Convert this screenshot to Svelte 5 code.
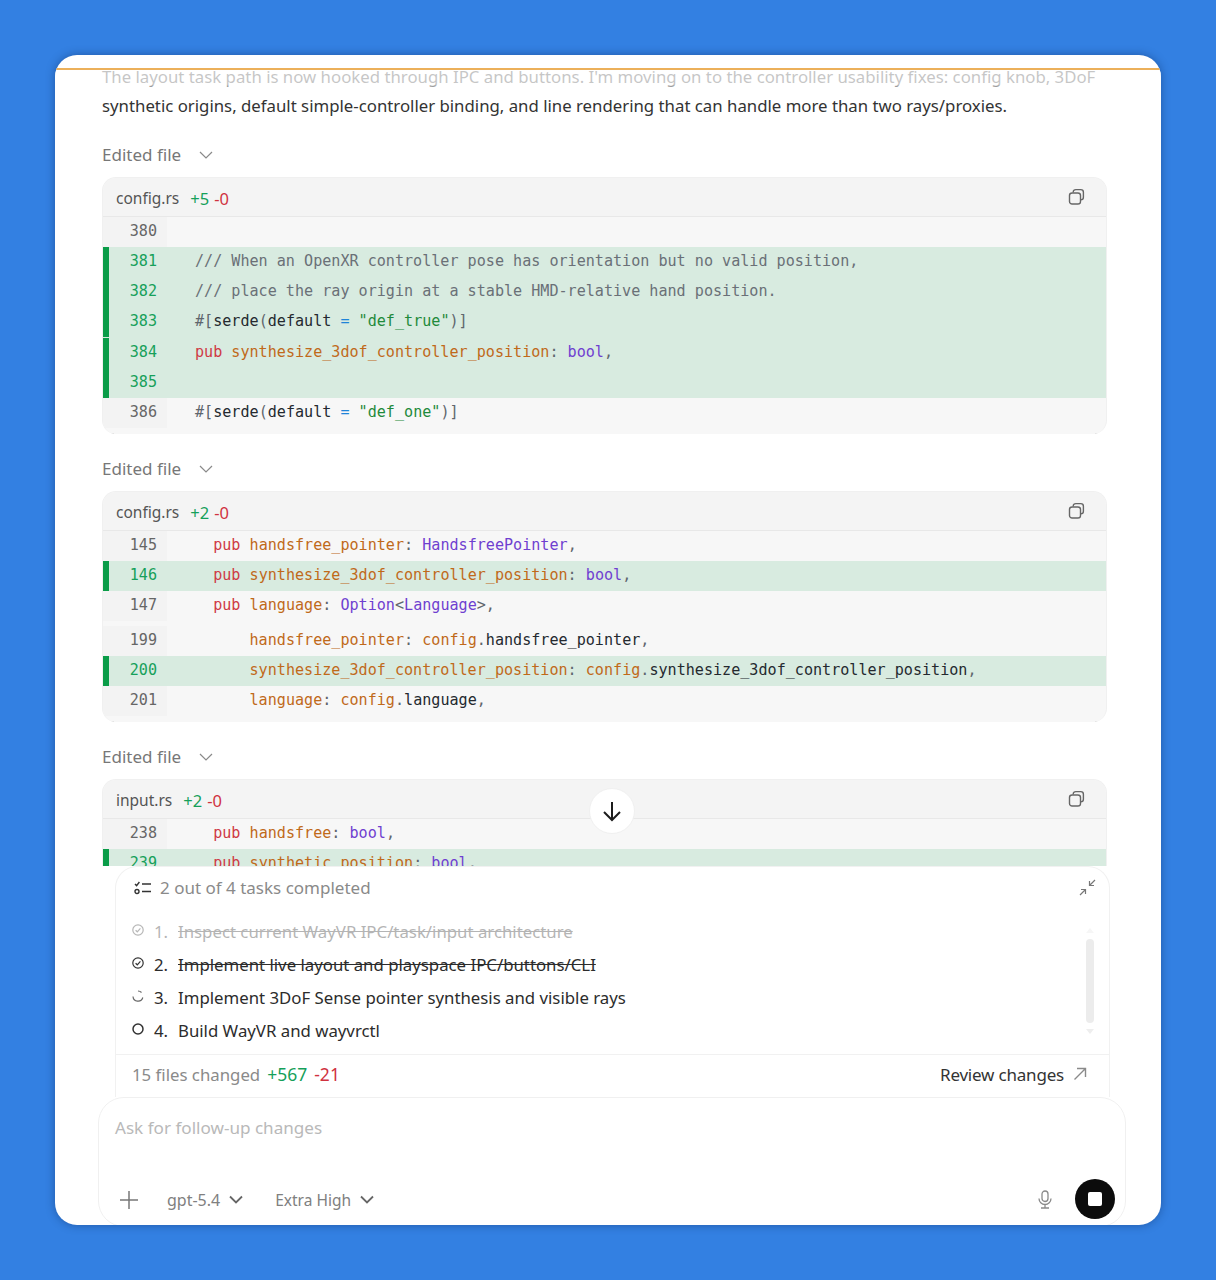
<script lang="ts">
  // token kinds: c comment, k keyword, f field, t type, s string, o operator, p plain, m muted
  const serde = (name: string) => [
    ["m", "#["], ["p", "serde"], ["m", "("], ["p", "default "], ["o", "="], ["s", ` "${name}"`], ["m", ")]"]
  ];

  const files = [
    {
      name: "config.rs", added: 5,
      rows: [
        { n: 380, code: [] },
        { n: 381, add: true, code: [["c", "/// When an OpenXR controller pose has orientation but no valid position,"]] },
        { n: 382, add: true, code: [["c", "/// place the ray origin at a stable HMD-relative hand position."]] },
        { n: 383, add: true, code: serde("def_true") },
        { n: 384, add: true, split: true, code: [["k", "pub "], ["f", "synthesize_3dof_controller_position"], ["m", ": "], ["t", "bool"], ["m", ","]] },
        { n: 385, add: true, code: [] },
        { n: 386, code: serde("def_one") }
      ]
    },
    {
      name: "config.rs", added: 2,
      rows: [
        { n: 145, code: [["p", "  "], ["k", "pub "], ["f", "handsfree_pointer"], ["m", ": "], ["t", "HandsfreePointer"], ["m", ","]] },
        { n: 146, add: true, code: [["p", "  "], ["k", "pub "], ["f", "synthesize_3dof_controller_position"], ["m", ": "], ["t", "bool"], ["m", ","]] },
        { n: 147, code: [["p", "  "], ["k", "pub "], ["f", "language"], ["m", ": "], ["t", "Option"], ["m", "<"], ["t", "Language"], ["m", ">,"]] },
        { n: 199, jump: true, code: [["p", "      "], ["f", "handsfree_pointer"], ["m", ": "], ["f", "config"], ["m", "."], ["p", "handsfree_pointer"], ["m", ","]] },
        { n: 200, add: true, code: [["p", "      "], ["f", "synthesize_3dof_controller_position"], ["m", ": "], ["f", "config"], ["m", "."], ["p", "synthesize_3dof_controller_position"], ["m", ","]] },
        { n: 201, code: [["p", "      "], ["f", "language"], ["m", ": "], ["f", "config"], ["m", "."], ["p", "language"], ["m", ","]] }
      ]
    },
    {
      name: "input.rs", added: 2,
      rows: [
        { n: 238, code: [["p", "  "], ["k", "pub "], ["f", "handsfree"], ["m", ": "], ["t", "bool"], ["m", ","]] },
        { n: 239, add: true, code: [["p", "  "], ["k", "pub "], ["f", "synthetic_position"], ["m", ": "], ["t", "bool"], ["m", ","]] }
      ]
    }
  ];

  const tasks = [
    { text: "Inspect current WayVR IPC/task/input architecture", state: "done", faded: true },
    { text: "Implement live layout and playspace IPC/buttons/CLI", state: "done" },
    { text: "Implement 3DoF Sense pointer synthesis and visible rays", state: "running" },
    { text: "Build WayVR and wayvrctl", state: "todo" }
  ];
</script>

<div class="window">
  <div class="topbar"></div>

  <div class="scroller">
    <p class="message">The layout task path is now hooked through IPC and buttons. I'm moving on to the controller usability fixes: config knob, 3DoF synthetic origins, default simple-controller binding, and line rendering that can handle more than two rays/proxies.</p>
    <div class="fade"></div>

    {#each files as file}
      <div class="edited">
        <span>Edited file</span>
        <svg width="16" height="16" viewBox="0 0 16 16" fill="none" stroke="#8a8a8a" stroke-width="1.2"><path d="M2 5 8 11l6-6" /></svg>
      </div>
      <div class="card">
        <div class="card-head">
          <span class="filename">{file.name}</span>
          <span class="plus">+{file.added}</span>
          <span class="minus">-0</span>
          <svg class="copy" width="18" height="18" viewBox="0 0 18 18" fill="none" stroke="#666" stroke-width="1.4">
            <rect x="1.5" y="5" width="11" height="11" rx="2.6" />
            <path d="M5.2 4.6V4.2a2.6 2.6 0 0 1 2.6-2.6h5a2.6 2.6 0 0 1 2.6 2.6v5a2.6 2.6 0 0 1-2.6 2.6h-.3" />
          </svg>
        </div>
        {#each file.rows as row}
          <div class="row" class:added={row.add} class:split={row.split} class:jump={row.jump}>
            <span class="num">{row.n}</span>
            <code>{#each row.code as [kind, text]}<span class={kind}>{text}</span>{/each}</code>
          </div>
        {/each}
      </div>
    {/each}

    <button class="to-bottom" aria-label="Scroll to bottom">
      <svg width="24" height="24" viewBox="0 0 24 24" fill="none" stroke="#1c1c1c" stroke-width="2"><path d="M12 3v18M4 13l8 8 8-8" /></svg>
    </button>
  </div>

  <section class="tasks">
    <header class="tasks-head">
      <svg width="18" height="14" viewBox="0 0 18 14" fill="none" stroke="#333" stroke-width="1.4">
        <path d="M1 3l1.6 1.6L5.4 1M8 3h9M8 10.5h9" />
        <circle cx="3" cy="10.5" r="2" />
      </svg>
      <span>2 out of 4 tasks completed</span>
      <svg class="collapse" width="17" height="17" viewBox="0 0 17 17" fill="none" stroke="#777" stroke-width="1.2">
        <path d="M16 1l-5.5 5.5M10.5 2v4.5H15M1 16l5.5-5.5M2 10.5h4.500V15" />
      </svg>
    </header>
    <div class="task-list">
      <ol>
        {#each tasks as task, i}
          <li class:faded={task.faded}>
            <svg width="12" height="12" viewBox="0 0 12 12" fill="none" stroke="#333" stroke-width="1.2">
              {#if task.state === "done"}
                <circle cx="6" cy="6" r="5.2" />
                <path d="M3.6 6.2 5.300 7.800 8.400 4.400" />
              {:else if task.state === "running"}
                <path d="M1 6.500a5 5 0 0 0 9.800 1M9.500 2.500A5 5 0 0 0 6 1" stroke="#666" />
              {:else}
                <circle cx="6" cy="6" r="5" stroke-width="1.500" />
              {/if}
            </svg>
            <span class="idx">{i + 1}.</span>
            <span class:struck={task.state === "done"}>{task.text}</span>
          </li>
        {/each}
      </ol>
      <div class="scrollbar">
        <i class="up"></i>
        <i class="thumb"></i>
        <i class="down"></i>
      </div>
    </div>
    <footer class="tasks-foot">
      <span class="changed">15 files changed</span>
      <span class="plus">+567</span>
      <span class="minus">-21</span>
      <span class="review">Review changes</span>
      <svg width="14" height="14" viewBox="0 0 14 14" fill="none" stroke="#8a8a8a" stroke-width="1.4"><path d="M1.500 12.500 12.500 1.500M4 1.500h8.500V10" /></svg>
    </footer>
  </section>

  <div class="composer">
    <div class="placeholder">Ask for follow-up changes</div>
    <div class="controls">
      <svg class="attach" width="20" height="20" viewBox="0 0 20 20" fill="none" stroke="#777" stroke-width="1.500"><path d="M10 1v18M1 10h18" /></svg>
      <span class="model">gpt-5.4</span>
      <svg width="14" height="9" viewBox="0 0 14 9" fill="none" stroke="#666" stroke-width="1.800"><path d="M1 1.500l6 6 6-6" /></svg>
      <span class="model effort">Extra High</span>
      <svg width="14" height="9" viewBox="0 0 14 9" fill="none" stroke="#666" stroke-width="1.800"><path d="M1 1.500l6 6 6-6" /></svg>
      <svg class="mic" width="14" height="19" viewBox="0 0 14 19" fill="none" stroke="#8a8a8a" stroke-width="1.300">
        <rect x="4" y="1" width="6" height="10.500" rx="3" />
        <path d="M1 8.500a6 6 0 0 0 12 0M7 14.500V18M3 18h8" />
      </svg>
      <button class="stop" aria-label="Stop"><i></i></button>
    </div>
  </div>
</div>

<style>
  :global(body) {
    background: #3380e2;
    font-family: "Noto Sans", sans-serif;
  }

  .window {
    position: relative;
    display: flex;
    flex-direction: column;
    width: 1106px;
    height: 1170px;
    margin: 55px;
    background: #fff;
    border-radius: 22px;
    overflow: hidden;
    box-shadow: 0 0 10px rgba(10, 40, 90, 0.45);
  }

  .topbar {
    flex: none;
    height: 13px;
    border-bottom: 2px solid #ecb05a;
  }

  .scroller {
    position: relative;
    flex: none;
    height: 796px;
    padding: 0 54px 0 47px;
    overflow: hidden;
  }

  .fade {
    position: absolute;
    top: 0;
    left: 0;
    right: 0;
    height: 22px;
    background: linear-gradient(rgba(255, 255, 255, 0.72) 65%, rgba(255, 255, 255, 0));
  }

  .message {
    margin: -8px 0 0;
    padding-bottom: 1px;
    font-size: 16.800px;
    line-height: 29px;
    color: #333;
  }

  .edited {
    display: flex;
    align-items: center;
    gap: 17px;
    height: 35px;
    padding-bottom: 1px;
    margin-top: 16px;
    color: #777;
    font-size: 17px;
  }

  .card {
    position: relative;
    margin-top: 4px;
    margin-bottom: 17px;
    padding-bottom: 6px;
    background: #f7f7f7;
    border: 1px solid #f0f0f0;
    border-width: 1px 1px 0;
    border-radius: 14px;
    overflow: hidden;
  }

  .card::before,
  .card::after {
    content: "";
    position: absolute;
    bottom: 0;
    width: 6px;
    height: 1px;
    background: #dedede;
  }

  .card::before {
    left: 5px;
  }

  .card::after {
    right: 5px;
  }

  .card-head {
    display: flex;
    align-items: center;
    gap: 5px;
    height: 36px;
    padding: 2px 20px 0 13px;
    background: #f4f4f4;
    border-bottom: 1px solid #e8e8e8;
    font-size: 16.500px;
  }

  .filename {
    margin-right: 6px;
    font-size: 15.500px;
    color: #555;
  }

  .plus {
    color: #16a05a;
  }

  .minus {
    color: #d0323f;
  }

  .copy {
    margin-left: auto;
    margin-top: -2px;
  }

  .row {
    display: flex;
    height: 30px;
    font-family: "DejaVu Sans Mono", monospace;
    font-size: 15.100px;
    line-height: 28px;
  }

  .row.split {
    padding-top: 1px;
  }

  .row.jump {
    margin-top: 5px;
  }

  .num {
    flex: none;
    box-sizing: border-box;
    width: 64px;
    padding-right: 10px;
    text-align: right;
    background: #f3f3f3;
    color: #666;
  }

  code {
    padding-left: 28px;
    font: inherit;
    white-space: pre;
    color: #24292f;
  }

  .added {
    background: #d8ebe0;
  }

  .added .num {
    background: transparent;
    border-left: 6px solid #0a9c48;
    color: #16a05a;
  }

  .c {
    color: #6a7077;
  }

  .k {
    color: #cf3a45;
  }

  .f {
    color: #c0691a;
  }

  .t {
    color: #6f3fd0;
  }

  .s {
    color: #1f8a3b;
  }

  .o {
    color: #1f84d8;
  }

  .m {
    color: #5f666d;
  }

  .to-bottom {
    position: absolute;
    left: 534px;
    top: 718px;
    display: grid;
    place-items: center;
    width: 46px;
    height: 46px;
    padding: 0;
    background: #fff;
    border: 1px solid #f0f0f0;
    border-radius: 50%;
  }

  .tasks {
    flex: none;
    box-sizing: border-box;
    width: 995px;
    height: 231px;
    margin-left: 60px;
    background: #fff;
    border: 1px solid #f1f1f1;
    border-bottom: 0;
    border-radius: 22px 22px 0 0;
  }

  .tasks-head {
    display: flex;
    align-items: center;
    gap: 8px;
    height: 41px;
    padding: 0 13px 0 18px;
    color: #8a8a8a;
    font-size: 17px;
  }

  .collapse {
    margin-left: auto;
  }

  .task-list {
    position: relative;
    height: 146px;
    border-bottom: 1px solid #f1f1f1;
  }

  ol {
    margin: 0;
    padding: 7px 0 0 16px;
    list-style: none;
  }

  li {
    display: flex;
    align-items: center;
    height: 33px;
    color: #2c2c2c;
    font-size: 16.800px;
  }

  li svg {
    margin-right: 10px;
    margin-top: -3px;
  }

  .idx {
    width: 24px;
  }

  li.faded {
    opacity: 0.35;
  }

  .struck {
    text-decoration: line-through;
  }

  .scrollbar {
    position: absolute;
    top: 20px;
    right: 15px;
    display: flex;
    flex-direction: column;
    align-items: center;
    gap: 6px;
    width: 9px;
  }

  .scrollbar i {
    display: block;
  }

  .thumb {
    width: 8px;
    height: 84px;
    background: #ececec;
    border-radius: 4px;
  }

  .up,
  .down {
    width: 0;
    height: 0;
    border: 4px solid transparent;
  }

  .up {
    border-bottom: 5px solid #f6f6f6;
    border-top: 0;
  }

  .down {
    border-top: 5px solid #eeeeee;
    border-bottom: 0;
  }

  .tasks-foot {
    display: flex;
    align-items: center;
    gap: 7px;
    height: 38px;
    padding: 0 22px 0 16px;
    font-size: 17.500px;
  }

  .changed {
    font-size: 16.800px;
    color: #8a8a8a;
  }

  .review {
    margin-left: auto;
    margin-right: 2px;
    font-size: 17px;
    color: #333;
    letter-spacing: -0.2px;
  }

  .composer {
    flex: none;
    box-sizing: border-box;
    width: 1028px;
    height: 130px;
    margin-left: 43px;
    background: #fff;
    border: 1px solid #f0f0f0;
    border-radius: 26px;
    padding: 16px 10px 0 16px;
  }

  .placeholder {
    height: 28px;
    color: #b9b9b9;
    font-size: 17.100px;
    line-height: 28px;
  }

  .controls {
    display: flex;
    align-items: center;
    height: 40px;
    margin-top: 37px;
  }

  .attach {
    margin-left: 4px;
    margin-right: 28px;
    margin-top: 1px;
  }

  .model {
    margin-right: 9px;
    margin-top: 2px;
    color: #808080;
    font-size: 16px;
  }

  .effort {
    margin-left: 32px;
    font-size: 15.500px;
  }

  .mic {
    margin-left: auto;
    margin-right: 23px;
    margin-top: 1px;
  }

  .stop {
    display: grid;
    place-items: center;
    width: 40px;
    height: 40px;
    padding: 0;
    background: #0c0c0c;
    border: 0;
    border-radius: 50%;
  }

  .stop i {
    display: block;
    width: 14px;
    height: 14px;
    background: #fff;
    border-radius: 2px;
  }
</style>
